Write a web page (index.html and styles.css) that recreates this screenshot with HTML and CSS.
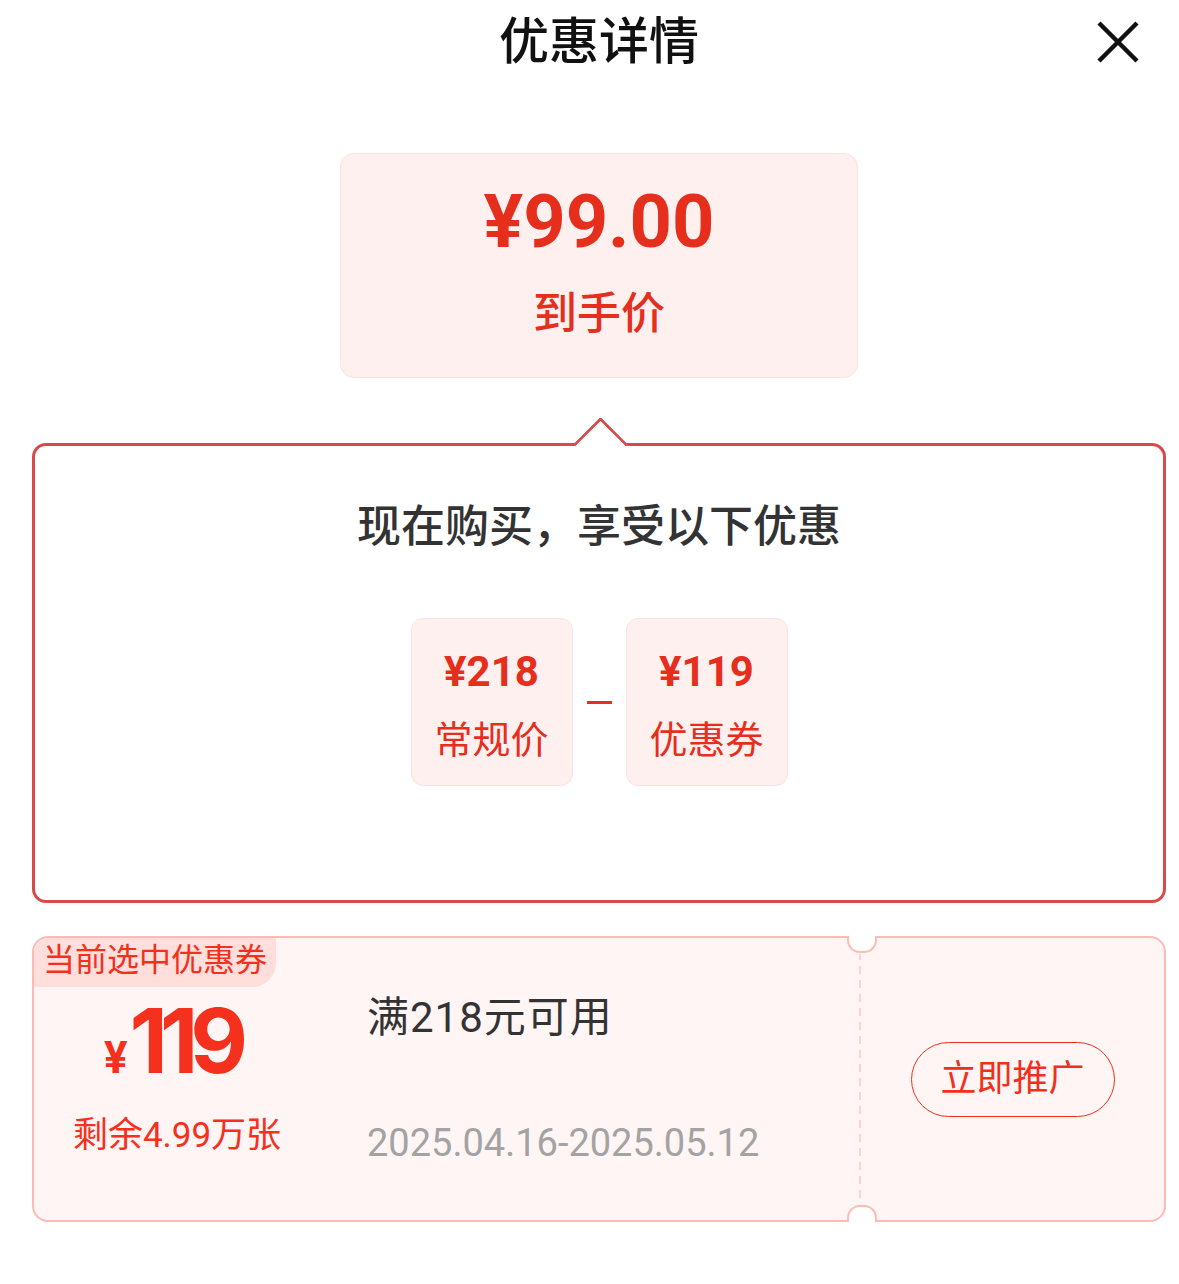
FILE: index.html
```html
<!DOCTYPE html>
<html lang="zh-CN">
  <head>
    <meta charset="UTF-8" />
    <title>优惠详情</title>
    <link rel="stylesheet" href="styles.css">
  </head>

  <body>
    <div class="sheet">
      <div class="sheet-head">
        <span></span>
        <h1 class="sheet-title">优惠详情</h1>
        <span class="close-btn">
          <svg width="44" height="44" viewBox="0 0 44 44">
            <path d="M3 3 L41 41 M41 3 L3 41" stroke="#111" stroke-width="4.5" fill="none" />
          </svg>
        </span>
      </div>

      <!-- 到手价 -->
      <div class="final-price">
        <div class="final-num">¥99.00</div>
        <div class="final-label">到手价</div>
      </div>

      <!-- 优惠计算 -->
      <div class="breakdown">
        <h2 class="breakdown-title">现在购买，享受以下优惠</h2>
        <div class="formula">
          <div class="formula-item">
            <div class="formula-num">¥218</div>
            <div class="formula-label">常规价</div>
          </div>
          <span class="formula-minus"></span>
          <div class="formula-item">
            <div class="formula-num">¥119</div>
            <div class="formula-label">优惠券</div>
          </div>
        </div>
      </div>

      <!-- 优惠券 -->
      <div class="coupon">
        <div class="coupon-main">
          <span class="coupon-tag">当前选中优惠券</span>
          <div class="coupon-value">
            <div class="coupon-amount"><span class="yen">¥</span><span class="num">119</span></div>
            <div class="coupon-left">剩余4.99万张</div>
          </div>
          <div class="coupon-info">
            <div class="coupon-rule">满218元可用</div>
            <div class="coupon-date">2025.04.16-2025.05.12</div>
          </div>
        </div>
        <div class="coupon-divider"></div>
        <div class="coupon-side">
          <span class="promote-btn">立即推广</span>
        </div>
      </div>
    </div>
  </body>
</html>
```

FILE: styles.css
```css
* {
  padding: 0;
  margin: 0;
  box-sizing: border-box;
}

body {
  background: #fff;
  font-family: Roboto, "Noto Sans CJK SC", sans-serif;
  color: #333;
}

.sheet {
  width: 1134px;
  margin-left: 32px;
}

.sheet-head {
  height: 84px;
  display: grid;
  grid-template-columns: 1fr auto 1fr;
  align-items: center;
}

.sheet-title {
  font-size: 50px;
  line-height: 84px;
  font-weight: 500;
  color: #111;
}

.close-btn {
  justify-self: end;
  margin-right: 26px;
  display: flex;
}

/* 到手价 */
.final-price {
  width: 518px;
  height: 225px;
  margin: 69px auto 0;
  padding-top: 31px;
  background: #fff0f0;
  border: 1.5px solid #fde2e2;
  border-radius: 14px;
  text-align: center;
  color: #e62e1d;
}

.final-num {
  font-size: 74px;
  line-height: 74px;
  font-weight: 700;
}

.final-label {
  margin-top: 25px;
  font-size: 44px;
  line-height: 60px;
  font-weight: 500;
}

/* 优惠计算 */
.breakdown {
  position: relative;
  height: 460px;
  margin-top: 65px;
  padding-top: 51px;
  border: 3px solid #d9494a;
  border-radius: 14px;
  text-align: center;
}

.breakdown::before {
  content: '';
  position: absolute;
  left: 50%;
  top: -21px;
  width: 36px;
  height: 36px;
  margin-left: -18px;
  background: #fff;
  border-top: 3px solid #d9494a;
  border-left: 3px solid #d9494a;
  border-top-left-radius: 3px;
  transform: rotate(45deg);
}

.breakdown-title {
  font-size: 44px;
  line-height: 60px;
  font-weight: 500;
  color: #333;
}

.formula {
  margin-top: 61px;
  display: flex;
  justify-content: center;
  align-items: center;
  gap: 14px;
}

.formula-item {
  width: 162px;
  height: 168px;
  padding-top: 31px;
  background: #fff0f0;
  border: 1.5px solid #fde2e2;
  border-radius: 12px;
  color: #e62e1d;
}

.formula-num {
  font-size: 42px;
  line-height: 44px;
  font-weight: 700;
}

.formula-label {
  margin-top: 23px;
  font-size: 38px;
  line-height: 46px;
}

.formula-minus {
  width: 25px;
  height: 3px;
  background: #e62e1d;
}

/* 优惠券 */
.coupon {
  display: flex;
  height: 286px;
  margin-top: 33px;
  background: #fff5f4;
  border: 2px solid #fcbcb5;
  border-radius: 16px;
}

.coupon-main {
  position: relative;
  flex: 1;
  display: flex;
}

.coupon-tag {
  position: absolute;
  left: 0;
  top: 0;
  height: 49px;
  padding: 0 9px;
  font-size: 32px;
  line-height: 45px;
  color: #f2301d;
  background: #ffdedb;
  border-radius: 14px 0 24px 0;
}

.coupon-value {
  width: 290px;
  padding-top: 58px;
  text-align: center;
  color: #f5301d;
}

.coupon-amount {
  display: flex;
  justify-content: center;
  align-items: baseline;
  padding-right: 14px;
}

.coupon-amount .yen {
  font-size: 44px;
  line-height: 1;
  font-weight: 700;
  margin-right: 2px;
}

.coupon-amount .num {
  font-family: Inter, Roboto, sans-serif;
  font-size: 89px;
  line-height: 90px;
  font-weight: 700;
  letter-spacing: -8px;
}

.coupon-left {
  margin-top: 30px;
  padding-right: 4px;
  font-size: 35px;
  line-height: 40px;
}

.coupon-info {
  padding: 56px 0 0 43px;
}

.coupon-rule {
  font-size: 42px;
  line-height: 48px;
  letter-spacing: 1px;
  color: #333;
}

.coupon-date {
  margin-top: 77px;
  font-size: 38px;
  line-height: 48px;
  color: #a3a3a3;
}

.coupon-divider {
  position: relative;
  width: 2px;
  padding: 16px 0;
  background: repeating-linear-gradient(to bottom, #fcd3ce 0 8px, transparent 8px 14px);
  background-clip: content-box;
}

.coupon-divider::before,
.coupon-divider::after {
  content: '';
  position: absolute;
  left: -12px;
  width: 26px;
  height: 15px;
  background: #fff;
  border: 2px solid #fcbcb5;
}

.coupon-divider::before {
  top: -2px;
  border-top: 0;
  border-radius: 0 0 13px 13px;
}

.coupon-divider::after {
  bottom: -2px;
  border-bottom: 0;
  border-radius: 13px 13px 0 0;
}

.coupon-side {
  width: 303px;
  display: flex;
  justify-content: center;
  align-items: center;
}

.promote-btn {
  width: 204px;
  height: 75px;
  border: 1.5px solid #f0301d;
  border-radius: 38px;
  font-size: 36px;
  line-height: 72px;
  text-align: center;
  color: #f0301d;
}
```
